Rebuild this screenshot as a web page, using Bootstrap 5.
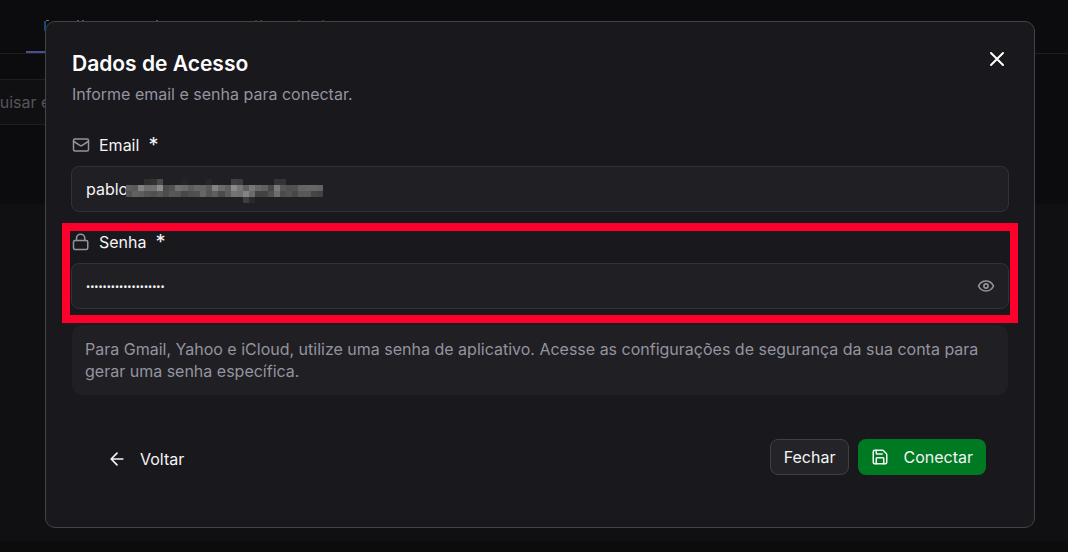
<!DOCTYPE html>
<html lang="pt-BR" data-bs-theme="dark">
<head>
<meta charset="utf-8">
<meta name="viewport" content="width=device-width, initial-scale=1">
<title>Dados de Acesso</title>
<link href="https://cdn.jsdelivr.net/npm/bootstrap@5.3.0/dist/css/bootstrap.min.css" rel="stylesheet">
<style>
  body { font-family: Inter, "Liberation Sans", sans-serif; font-size: 16px; line-height: 24px; background: #0c0c0e; color: #f4f4f5; overflow: hidden; }
  .page { min-height: 100vh; }
  .tabs-bar { height: 54px; border-bottom: 1px solid #1f1f22; }
  .tab-link { width: 300px; margin-left: 26px; border-bottom: 2px solid #484d96; }
  .search-row { padding-top: 25px; height: 150px; }
  .search-row .form-control { height: 46px; margin-left: -52px; width: 50%; background: #101012; border: 1px solid #1f1f22; border-radius: 8px; padding: 0 13px; }
  .search-row .form-control::placeholder { color: #55555a; opacity: 1; }
  .page-body { background: #101012; }
  .page-foot { height: 11px; }

  .overlay { padding: 21px 33px 24px 45px; }
  .dialog { background: #19181d; border: 1px solid #424247; border-radius: 10px; padding: 28px 25px 50px; }
  .dialog-title { font-size: 21px; line-height: 28px; font-weight: 600; color: #fff; }
  .dim { color: #94949f; }
  .dialog-head { margin: 0 0 27px 1px; }
  .dialog-close { width: 24px; height: 24px; margin-top: -3px; color: #fff; }
  .form-label { gap: 9px; margin-bottom: 9px; padding-left: 1px; }
  .field { margin-bottom: 18px; }
  .field .form-control { height: 46px; background: #201f24; border: 1px solid #323236; border-radius: 8px; padding: 0 14px; color: #f4f4f5; font-size: 16px; }
  .field .secret { font-family: "Noto Sans", sans-serif; font-size: 11px; padding-right: 48px; }
  .star { font-size: 20px; }
  .redacted { left: 55px; top: 13px; }
  .eye { right: 13px; top: 13px; width: 20px; height: 20px; color: #94949f; }
  .marked { margin-bottom: 16px; }
  .marked::after { content: ""; position: absolute; inset: -7px -9px -14px; border: 8px solid #ff002d; pointer-events: none; }
  .hint { margin: 0 1px 44px; padding: 13px; border-radius: 10px; background: #201f24; line-height: 22px; }
  .actions { padding: 0 23px; }
  .actions .btn { height: 36px; padding: 0 13px; border-radius: 8px; font-size: 16px; color: #f4f4f5; }
  .actions .btn-back { gap: 13px; margin-top: 2px; }
  .actions .btn-close-dialog { background: #242428; border: 1px solid #3f3f44; }
  .actions .btn-save { gap: 14px; background: #007a22; border: 0; }
  .action-pair { gap: 9px; }
  .line-icon { fill: none; stroke: currentColor; stroke-width: 2; stroke-linecap: round; stroke-linejoin: round; flex: none; }
</style>
</head>
<body>
<div class="page d-flex flex-column" aria-hidden="true">
  <div class="tabs-bar d-flex">
    <div class="tab-link d-flex">
      <svg class="mt-auto" width="300" height="32" viewBox="26 20 300 32" shape-rendering="crispEdges">
        <path fill="#174a7c" d="M44 22h2v10h-2z"/>
        <path fill="#8a6d55" d="M46 21h3v1h-3z"/>
        <path fill="#55555a" d="M77 21h2v1h-2zM82 21h2v1h-2zM156 21h2v1h-2z"/>
        <path fill="#4d331d" d="M255 21h2v1h-2zM260 21h2v1h-2zM298 21h2v1h-2zM322 21h2v1h-2z"/>
      </svg>
    </div>
  </div>
  <div class="search-row"><input class="form-control" type="search" placeholder="Pesquisar email" aria-label="Pesquisar email" tabindex="-1"></div>
  <div class="page-body flex-grow-1"></div>
  <div class="page-foot"></div>
</div>

<div class="overlay position-fixed top-0 start-0 w-100">
  <form class="dialog" role="dialog" aria-labelledby="dialogTitle">
    <div class="dialog-head d-flex justify-content-between align-items-start">
      <div>
        <h1 class="dialog-title mb-0" id="dialogTitle">Dados de Acesso</h1>
        <p class="dim mb-0 pt-1">Informe email e senha para conectar.</p>
      </div>
      <button type="button" class="dialog-close btn p-0 border-0 d-flex" aria-label="Fechar janela">
        <svg class="line-icon" width="24" height="24" viewBox="0 0 24 24"><path d="M18 6 6 18M6 6l12 12"/></svg>
      </button>
    </div>

    <div class="field">
      <label class="form-label d-flex align-items-center" for="email">
        <svg class="line-icon dim" width="18" height="18" viewBox="0 0 24 24"><rect x="2" y="4" width="20" height="16" rx="2"/><path d="m22 7-8.970 5.700a1.940 1.940 0 0 1-2.060 0L2 7"/></svg>
        <span>Email</span><span class="star">*</span>
      </label>
      <div class="position-relative">
        <input class="form-control" id="email" type="text" value="pablo">
        <svg class="redacted position-absolute" width="197" height="24" viewBox="0 0 32 4" preserveAspectRatio="none" shape-rendering="crispEdges" id="mosaic" aria-hidden="true"></svg>
      </div>
    </div>

    <div class="field marked position-relative">
      <label class="form-label d-flex align-items-center" for="senha">
        <svg class="line-icon dim" width="18" height="18" viewBox="0 0 24 24"><rect x="2" y="10" width="19" height="12" rx="2"/><path d="M6 10V7a5.500 5.500 0 0 1 11 0v3"/></svg>
        <span>Senha</span><span class="star">*</span>
      </label>
      <div class="position-relative">
        <input class="form-control secret" id="senha" type="password" value="abcd efgh ijkl mnop">
        <button type="button" class="eye btn p-0 border-0 d-flex position-absolute" aria-label="Mostrar senha">
          <svg class="line-icon" width="20" height="20" viewBox="0 0 24 24"><path d="M3 12c2-4 5.200-6 9-6s7 2 9 6c-2 4-5.200 6-9 6s-7-2-9-6z"/><circle cx="12" cy="12" r="2.500"/></svg>
        </button>
      </div>
    </div>

    <p class="hint dim">Para Gmail, Yahoo e iCloud, utilize uma senha de aplicativo. Acesse as configurações de segurança da sua conta para gerar uma senha específica.</p>

    <div class="actions d-flex justify-content-between align-items-start">
      <button type="button" class="btn btn-back border-0 d-flex align-items-center">
        <svg class="line-icon" width="20" height="20" viewBox="0 0 24 24"><path d="m12 19-7-7 7-7M19 12H5"/></svg>
        <span>Voltar</span>
      </button>
      <div class="action-pair d-flex">
        <button type="button" class="btn btn-close-dialog">Fechar</button>
        <button type="submit" class="btn btn-save d-flex align-items-center">
          <svg class="line-icon" width="18" height="18" viewBox="0 0 24 24"><path d="M15.200 3a2 2 0 0 1 1.400.6l3.800 3.800a2 2 0 0 1 .6 1.400V19a2 2 0 0 1-2 2H5a2 2 0 0 1-2-2V5a2 2 0 0 1 2-2z"/><path d="M17 21v-7a1 1 0 0 0-1-1H8a1 1 0 0 0-1 1v7M7 3v4a1 1 0 0 0 1 1h7"/></svg>
          <span>Conectar</span>
        </button>
      </div>
    </div>
  </form>
</div>

<script src="https://cdn.jsdelivr.net/npm/bootstrap@5.3.0/dist/js/bootstrap.bundle.min.js"></script>
<script>
  // Grey level of every block that hides the rest of the address; 00 is left clear
  const rows = [
    "00 00 00 2e 32 4a 00 00 00 25 00 00 00 26 00 00 00 40 3c 00 00 00 00 00 34 34 00 00 00 00 00 00",
    "5e 5a 82 6e 70 8c 4a 52 70 6a 5c 66 64 58 82 6c 60 8a 76 60 78 68 60 48 7a 56 50 52 64 66 66 62",
    "52 62 5e 54 50 58 4c 58 56 48 4e 50 66 54 5e 4c 5c 74 70 84 6c 42 42 50 6e 4c 52 48 58 58 46 42",
    "00 00 00 00 00 00 00 00 00 00 00 00 00 00 00 00 00 00 00 3e 2a 00 00 00 00 00 00 00 00 00 00 00"
  ];
  const mosaic = document.getElementById("mosaic");
  rows.forEach((row, y) => row.split(" ").forEach((c, x) => {
    if (c === "00") return;
    const r = document.createElementNS("http://www.w3.org/2000/svg", "rect");
    Object.entries({ x, y, width: 1, height: 1, fill: "#" + c + c + c }).forEach(([k, v]) => r.setAttribute(k, v));
    mosaic.append(r);
  }));
</script>
</body>
</html>
